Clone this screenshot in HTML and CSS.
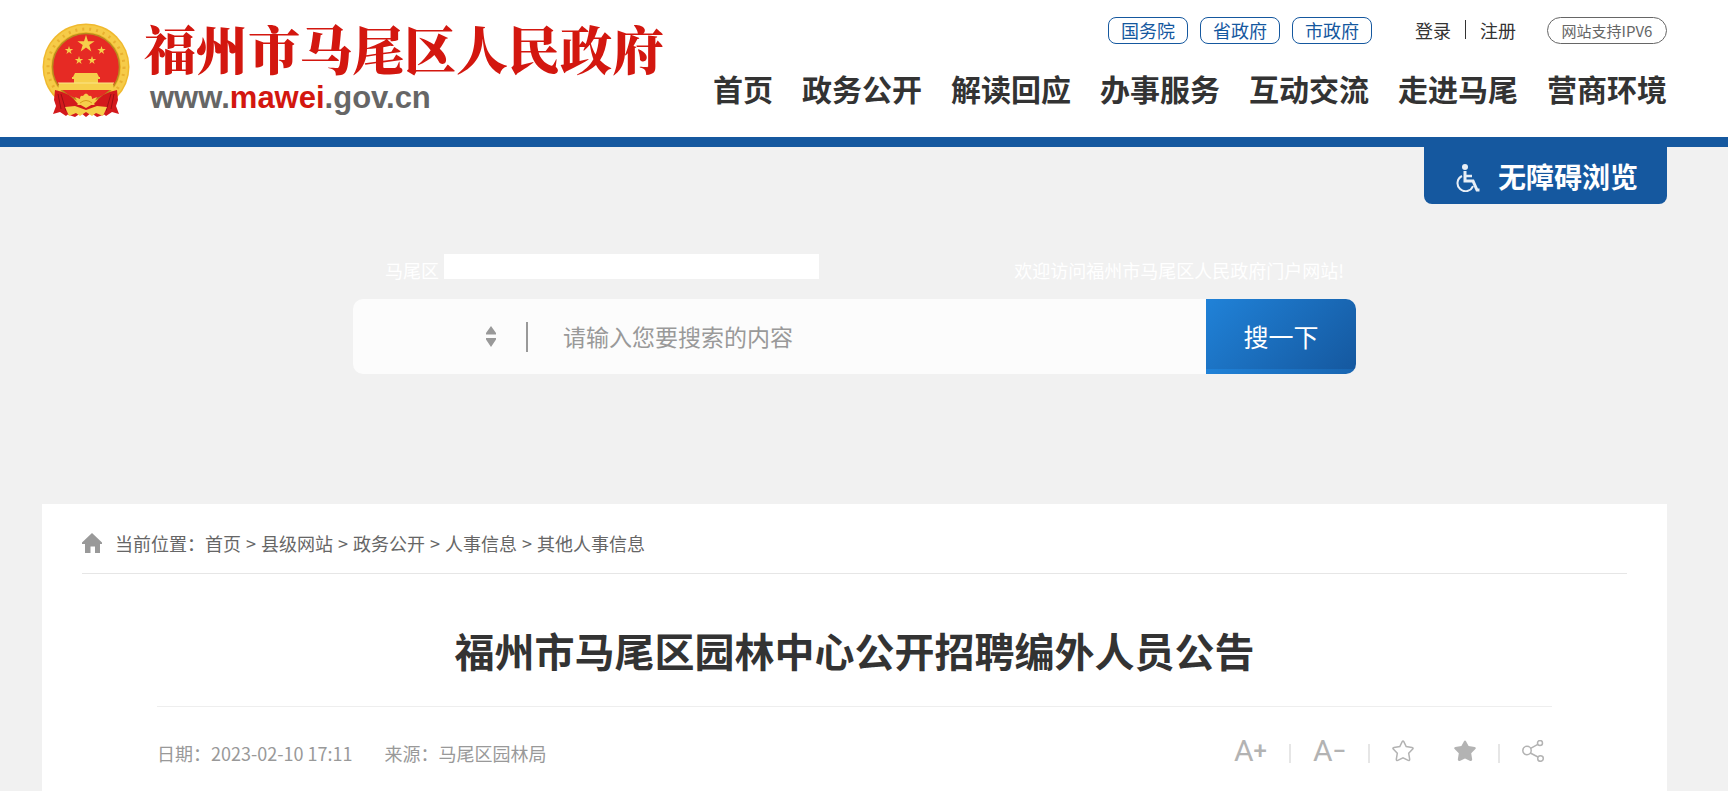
FILE: index.html
```html
<!DOCTYPE html>
<html lang="zh-CN">
<head>
    <meta charset="UTF-8">
    <meta name="viewport" content="width=device-width, initial-scale=1.0">
    <title>福州市马尾区园林中心公开招聘编外人员公告</title>
    <link rel="stylesheet" href="styles.css">
</head>
<body>
    <header class="header">
        <div class="container header-inner">
            <a class="logo" href="#">
                <svg class="emblem" viewBox="0 0 88 95" aria-hidden="true">
                    <circle cx="44" cy="44" r="43.5" fill="#f0b92d"/>
                    <circle cx="44" cy="44" r="38.500" fill="none" stroke="#f6cb48" stroke-width="7"/>
                    <circle cx="44" cy="44" r="38" fill="none" stroke="#e9b030" stroke-width="3" stroke-dasharray="2 5"/>
                    <circle cx="44" cy="44" r="33.5" fill="#e62a24" stroke="#b88a1e" stroke-width="1.5"/>
                    <g fill="#f6cf4b">
                        <path d="M44 12l2 6.200h6.600l-5.300 3.900 2 6.300-5.300-3.900-5.300 3.900 2-6.300-5.300-3.900h6.600z"/>
                        <path id="star" d="M27 23l1 3h3.200l-2.600 1.900 1 3.100-2.600-1.900-2.600 1.900 1-3.100-2.600-1.900H26z"/>
                        <use href="#star" x="32.500"/>
                        <use href="#star" x="10" y="10"/>
                        <use href="#star" x="23" y="10"/>
                        <path d="M33 50h22l2 4H31z"/>
                        <path d="M30 54h28v2H30z"/>
                        <path d="M32 56h24v4H32z"/>
                        <path d="M17 60h54l1 7H16z"/>
                    </g>
                    <path d="M16 60h56" stroke="#fbe58a"/>
                    <path d="M13 67q14 2 23 14L24 93l-6-4-7 2 3-8-2-6z" fill="#d3191c"/>
                    <path d="M75 67q-14 2-23 14l12 12 6-4 7 2-3-8 2-6z" fill="#d3191c"/>
                    <path d="M16 71l3 15M19 71l5 17M72 71l-3 15M69 71l-5 17" stroke="#9c1015" fill="none"/>
                    <path d="M24 82h40v9l-9 3-6-4-5 4-5-4-6 4-9-3z" fill="#d3191c"/>
                    <path d="M23 84l10-1 11 4 11-4 10 1-4 9-7-3-4 3-6-4-6 4-4-3-7 3z" fill="#f6cf4b"/>
                    <path d="M33 74l5 2q0-4 3-3 3-5 6 0 3-1 3 3l5-2-4 7-7 4-7-4z" fill="#f6cf4b"/>
                    <path d="M38 80q6-5 12 0" stroke="#d99a1c" fill="none"/>
                </svg>
                <span class="logo-text">
                    <span class="site-name">福州市马尾区人民政府</span>
                    <span class="site-url">www.<span class="red">mawei</span>.gov.cn</span>
                </span>
            </a>
            <div class="header-right">
                <div class="top-links">
                    <a class="gov-link" href="#">国务院</a>
                    <a class="gov-link" href="#">省政府</a>
                    <a class="gov-link" href="#">市政府</a>
                    <div class="account">
                        <a href="#">登录</a>
                        <span class="account-line"></span>
                        <a href="#">注册</a>
                    </div>
                    <a class="ipv6" href="#">网站支持IPV6</a>
                </div>
                <nav class="nav">
                    <a href="#">首页</a>
                    <a href="#">政务公开</a>
                    <a href="#">解读回应</a>
                    <a href="#">办事服务</a>
                    <a href="#">互动交流</a>
                    <a href="#">走进马尾</a>
                    <a href="#">营商环境</a>
                </nav>
            </div>
        </div>
    </header>

    <div class="container">
        <section class="banner">
            <button class="barrier-free" type="button">
                <svg width="24" height="28" viewBox="0 0 24 28" aria-hidden="true">
                    <circle cx="9" cy="3" r="3" fill="#e8eef6"/>
                    <path d="M9 7v10h8l4 9h2.500" fill="none" stroke="#e8eef6" stroke-width="3"/>
                    <path d="M9 12h7" stroke="#e8eef6" stroke-width="2.500"/>
                    <path d="M6 12a8 8 0 1 0 11 10" fill="none" stroke="#e8eef6" stroke-width="2"/>
                </svg>
                <span>无障碍浏览</span>
            </button>

            <div class="search-area">
                <div class="search-info">
                    <span>马尾区</span>
                    <div class="weather"></div>
                    <span class="welcome">欢迎访问福州市马尾区人民政府门户网站!</span>
                </div>
                <form class="search">
                    <div class="search-type">
                        <select aria-label="搜索范围">
                            <option></option>
                        </select>
                        <svg class="type-arrows" width="10" height="21" viewBox="0 0 10 21" aria-hidden="true">
                            <path d="M5 0l5 7v1.500H0V7zM0 12h10v1.500L5 21l-5-7.500z" fill="#999"/>
                        </svg>
                    </div>
                    <input class="search-input" type="text" aria-label="搜索内容" placeholder="请输入您要搜索的内容">
                    <button class="search-btn" type="submit">搜一下</button>
                </form>
            </div>
        </section>

        <main class="content">
            <nav class="breadcrumb">
                <svg width="20" height="20" viewBox="0 0 20 20" aria-hidden="true">
                    <path d="M10 0l10 9.500V11h-2v9h-5v-6.500H8.500V20H3v-9H0V9.500z" fill="#999"/>
                </svg>
                <span class="here">当前位置：</span>
                <a href="#">首页</a>
                <span class="gt">&gt;</span>
                <a href="#">县级网站</a>
                <span class="gt">&gt;</span>
                <a href="#">政务公开</a>
                <span class="gt">&gt;</span>
                <a href="#">人事信息</a>
                <span class="gt">&gt;</span>
                <a href="#">其他人事信息</a>
            </nav>

            <article class="article">
                <h1>福州市马尾区园林中心公开招聘编外人员公告</h1>
                <div class="meta">
                    <span class="date">日期：2023-02-10 17:11</span>
                    <span>来源：马尾区园林局</span>
                    <div class="tools">
                        <button class="tool font-size" type="button">A<span>+</span></button>
                        <span class="tool-line"></span>
                        <button class="tool font-size" type="button">A<span>−</span></button>
                        <span class="tool-line"></span>
                        <button class="tool" type="button" aria-label="收藏">
                            <svg width="22" height="22" viewBox="0 0 22 22">
                                <path d="M10.200 1.600q.8-1.400 1.600 0l2.400 4.900 5.800.9q1.700.4.700 1.700l-4 4.200 1 6q0 1.600-1.500 1.100L11 17.900l-5.200 2.500q-1.500.5-1.500-1.100l1-6-4-4.200q-1-1.300.7-1.700l5.800-.9z" fill="none" stroke="#b3b3b3" stroke-width="1.500"/>
                            </svg>
                        </button>
                        <button class="tool starred" type="button" aria-label="已收藏">
                            <svg width="22" height="22" viewBox="0 0 22 22">
                                <path d="M10 1.200q1-1.600 2 0l2.600 4.900 6 .9q2 .6.800 2l-4.200 4.300 1 6.300q-.2 2-2 1.300L11 18.500l-5.200 2.400q-1.800.7-2-1.300l1-6.300L.6 9q-1.200-1.400.8-2l6-.9z" fill="#b3b3b3"/>
                            </svg>
                        </button>
                        <span class="tool-line"></span>
                        <button class="tool" type="button" aria-label="分享">
                            <svg width="22" height="22" viewBox="0 0 22 22" fill="none" stroke="#b3b3b3" stroke-width="1.500">
                                <circle cx="5" cy="10.500" r="4.200"/>
                                <circle cx="18" cy="3" r="2.500"/>
                                <circle cx="18.500" cy="18.500" r="2.800"/>
                                <path d="M8.600 8.300l7.200-4M8.300 13l7.700 4"/>
                            </svg>
                        </button>
                    </div>
                </div>
            </article>
        </main>
    </div>
</body>
</html>
```

FILE: styles.css
```css
* {
    box-sizing: border-box;
}
html {
    height: 100%;
}
body {
    font-family: "Noto Sans CJK SC", sans-serif;
    font-size: 18px;
    line-height: 26px;
    color: #333;
    background-color: #f1f1f1;
    margin: 0;
    display: flex;
    flex-direction: column;
    min-height: 100%;
}
a {
    color: inherit;
    text-decoration: none;
}
button, input, select {
    font-family: inherit;
    border: none;
    padding: 0;
    margin: 0;
    background: none;
}
button {
    cursor: pointer;
}
svg {
    display: block;
    flex: none;
}
.container {
    padding: 0 61px 0 42px;
}

/* header */
.header {
    background-color: #fff;
    border-bottom: 10px solid #15589f;
}
.header-inner {
    display: flex;
    justify-content: space-between;
    height: 137px;
}
.logo {
    display: flex;
    align-items: flex-start;
    padding-top: 23px;
}
.emblem {
    width: 88px;
    height: 95px;
}
.logo-text {
    display: flex;
    flex-direction: column;
    padding-left: 14px;
    white-space: nowrap;
}
.site-name {
    font-family: "Noto Serif CJK SC", "Noto Sans CJK SC", serif;
    font-size: 52px;
    line-height: 50px;
    font-weight: 900;
    color: #d3170f;
}
.site-url {
    font-family: "Liberation Sans", Arial, sans-serif;
    font-size: 31px;
    line-height: 50px;
    font-weight: bold;
    color: #666;
    padding-left: 6px;
}
.red {
    color: #d3170f;
}
.header-right {
    padding-top: 17px;
    white-space: nowrap;
}
.top-links {
    display: flex;
    justify-content: flex-end;
}
.gov-link {
    width: 80px;
    height: 27px;
    line-height: 25px;
    border: 1px solid #15589f;
    border-radius: 8px;
    color: #15589f;
    text-align: center;
    margin-right: 12px;
}
.account {
    display: flex;
    align-items: center;
    height: 25px;
    margin: 0 31px;
}
.account-line {
    width: 1px;
    height: 19px;
    background-color: #333;
    margin: 0 14px;
}
.ipv6 {
    width: 120px;
    height: 27px;
    line-height: 25px;
    border: 1px solid #666;
    border-radius: 14px;
    font-size: 15px;
    color: #666;
    text-align: center;
}
.nav {
    display: flex;
    gap: 29px;
    margin-top: 22px;
    font-size: 30px;
    line-height: 44px;
    font-weight: bold;
}

/* search banner */
.banner {
    display: flex;
    flex-direction: column;
    height: 357px;
}
.barrier-free {
    display: flex;
    align-items: center;
    align-self: flex-end;
    gap: 18px;
    height: 57px;
    padding: 4px 29px 0 32px;
    border-radius: 0 0 8px 8px;
    background-color: #15589f;
    color: #fff;
    font-size: 28px;
    font-weight: bold;
    white-space: nowrap;
}
.barrier-free span {
    padding-bottom: 4px;
}
.search-area {
    width: 100%;
    max-width: 1003px;
    margin: 50px auto 0;
}
.search-info {
    display: flex;
    height: 45px;
    padding: 0 12px 0 32px;
    color: #fff;
    white-space: nowrap;
}
.search-info span {
    padding-top: 3px;
}
.weather {
    width: 375px;
    height: 25px;
    margin-left: 5px;
    background-color: #fff;
}
.welcome {
    margin-left: auto;
}
.search {
    display: flex;
    height: 75px;
    border-radius: 10px;
    background-color: #fcfcfc;
    overflow: hidden;
}
.search-type {
    display: flex;
    align-items: center;
    width: 175px;
    position: relative;
}
.search-type select {
    appearance: none;
    width: 100%;
    height: 30px;
    border-right: 2px solid #999;
}
.type-arrows {
    position: absolute;
    right: 32px;
    pointer-events: none;
}
.search-input {
    flex: 1;
    min-width: 0;
    padding: 0 0 2px 35px;
    font-size: 23px;
    color: #333;
    outline: none;
}
.search-input::placeholder {
    color: #999;
    opacity: 1;
}
.search-btn {
    width: 150px;
    padding-bottom: 2px;
    font-size: 25px;
    color: #fff;
    background: linear-gradient(135deg, #2082d8, #15589f) 0 0 / 100% 70px;
}

/* article */
.content {
    background-color: #fff;
    padding: 0 40px;
    min-height: 287px;
}
.breadcrumb {
    display: flex;
    align-items: center;
    height: 70px;
    padding-top: 8px;
    border-bottom: 1px solid #e6e6e6;
    color: #666;
    white-space: nowrap;
}
.here {
    margin-left: 13px;
}
.gt {
    margin: 0 5px;
}
.article {
    padding: 0 75px;
}
.article h1 {
    margin: 0;
    padding: 46px 0 26px;
    font-size: 40px;
    line-height: 60px;
    text-align: center;
    border-bottom: 1px solid #eee;
}
.meta {
    display: flex;
    align-items: center;
    height: 84px;
    padding-top: 8px;
    color: #999;
    white-space: nowrap;
}
.date {
    margin-right: 32px;
}
.tools {
    display: flex;
    align-items: center;
    margin-left: auto;
    padding-right: 8px;
}
.tool {
    display: flex;
    align-items: center;
    padding-bottom: 4px;
    color: #b3b3b3;
}
.font-size {
    font-family: Roboto, sans-serif;
    font-size: 30px;
    line-height: 30px;
}
.font-size span {
    font-size: 24px;
    font-weight: 500;
}
.tool-line {
    width: 2px;
    height: 19px;
    margin: 0 22px;
    background-color: #e6e6e6;
}
.starred {
    margin-left: 40px;
}
```
